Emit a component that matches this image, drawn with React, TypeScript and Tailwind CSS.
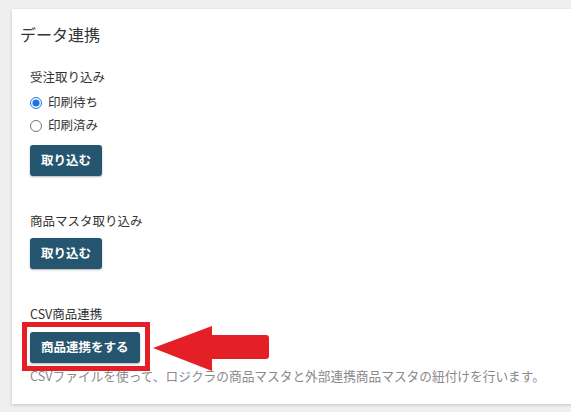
import React from 'react';

const FONT = { fontFamily: '"Noto Sans CJK JP", "Noto Sans", sans-serif' };

const ImportButton: React.FC<{ label: string }> = ({ label }) => (
  <button className="h-[31px] px-[11px] rounded-[3px] bg-[#26566f] text-white text-[12.5px] font-bold shadow-[0_1px_2px_rgba(0,0,0,0.3)]">
    {label}
  </button>
);

const App: React.FC = () => {
  return (
    <div className="w-[571px] h-[412px] overflow-hidden bg-[#efefef]" style={FONT}>
      <div className="ml-[12px] mt-[9px] w-[600px] bg-white shadow-[0_1px_3px_rgba(0,0,0,0.18)] pt-[13px] pb-[18px]">
        <h2 className="pl-[8px] text-[16px] leading-[24px] text-[#333]">データ連携</h2>

        <div className="pl-[18px]">
          {/* 受注 */}
          <p className="mt-[21px] text-[12.5px] leading-[20px] text-[#333]">受注取り込み</p>
          <div className="mt-[4px]">
            <label className="flex items-center h-[23px] gap-[6px] text-[12.5px] text-[#333]">
              <input type="radio" name="status" defaultChecked className="m-0 w-[12px] h-[12px] accent-[#1a73e8]" />
              印刷待ち
            </label>
            <label className="flex items-center h-[23px] gap-[6px] text-[12.5px] text-[#333]">
              <input type="radio" name="status" className="m-0 w-[12px] h-[12px]" />
              印刷済み
            </label>
          </div>
          <div className="mt-[8px]">
            <ImportButton label="取り込む" />
          </div>

          {/* 商品マスタ */}
          <p className="mt-[35px] text-[12.5px] leading-[20px] text-[#333]">商品マスタ取り込み</p>
          <div className="mt-[7px]">
            <ImportButton label="取り込む" />
          </div>

          {/* CSV */}
          <p className="mt-[35px] text-[12.5px] leading-[20px] text-[#333]">CSV商品連携</p>
          <div className="mt-[8px] relative w-fit">
            <ImportButton label="商品連携をする" />
            {/* annotation */}
            <div className="absolute left-[-8px] top-[-10px] w-[128px] h-[49px] border-[5px] border-[#e51f26] z-10" />
            <svg className="absolute left-[123px] top-[-6px] z-10" width="118" height="46" viewBox="0 0 118 46">
              <path d="M0 22 L59 0 L59 9 L113 9 Q116 9 116 12 L116 30 Q116 33 113 33 L59 33 L59 45 Z" fill="#e51f26" />
            </svg>
          </div>
          <p className="mt-[3px] text-[12.7px] leading-[20px] text-[#8a8a8a]">
            CSVファイルを使って、ロジクラの商品マスタと外部連携商品マスタの紐付けを行います。
          </p>
        </div>
      </div>
    </div>
  );
};

export default App;
